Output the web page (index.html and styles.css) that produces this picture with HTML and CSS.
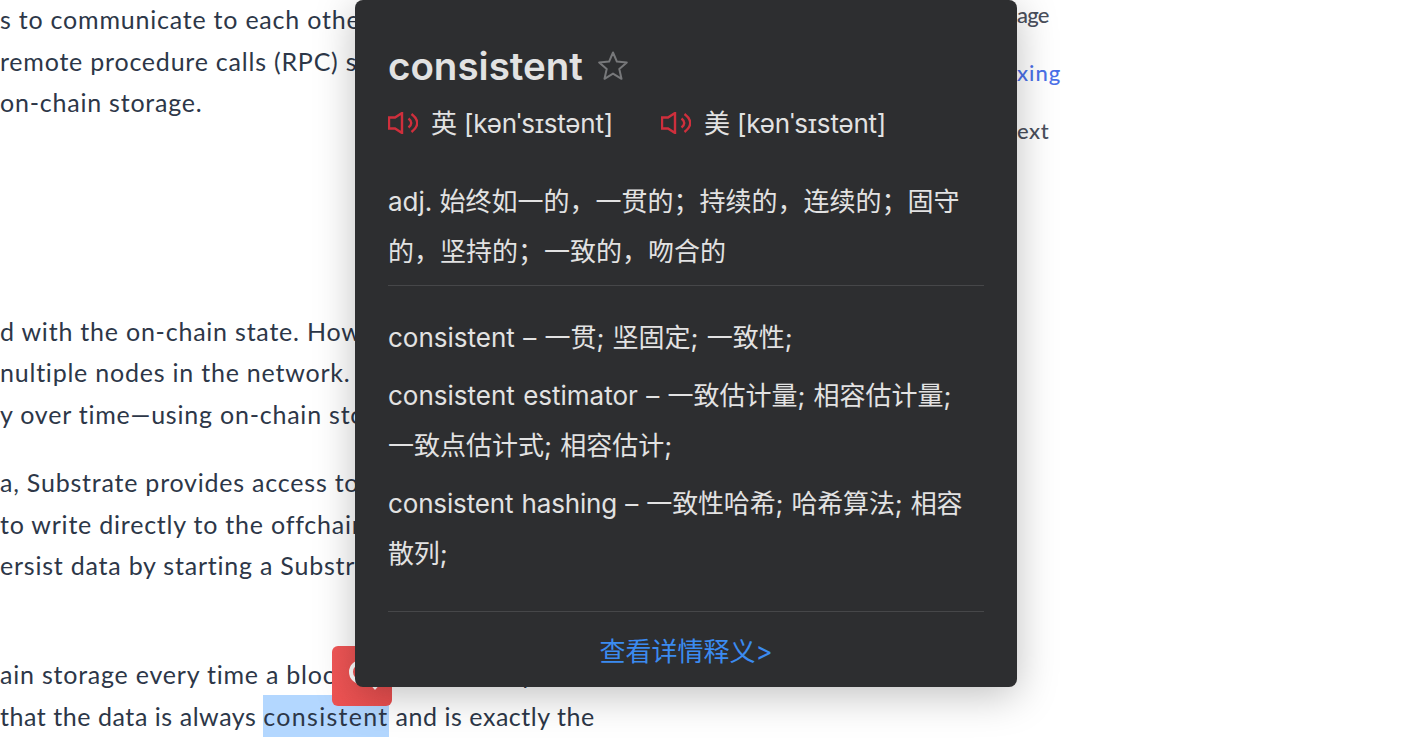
FILE: index.html
```html
<!DOCTYPE html>
<html lang="en">
    <head>
        <meta charset="UTF-8" />
        <title>consistent</title>
        <link rel="stylesheet" href="styles.css">
    </head>
    <body>
        <main class="article">
            <p class="para para-first">
                <span class="line">s to communicate to each othe</span>
                <span class="line">remote procedure calls (RPC) s</span>
                <span class="line">on-chain storage.</span>
            </p>
            <p class="para para-far">
                <span class="line">d with the on-chain state. Howe</span>
                <span class="line">nultiple nodes in the network. T</span>
                <span class="line">y over time—using on-chain sto</span>
            </p>
            <p class="para para-third">
                <span class="line">a, Substrate provides access to</span>
                <span class="line">to write directly to the offchain</span>
                <span class="line">ersist data by starting a Substr</span>
            </p>
            <p class="para para-mid">
                <span class="line">ain storage every time a block is processed by</span>
                <span class="line line-last">that the data is always <span class="selected">consistent</span> and is exactly the</span>
            </p>
        </main>
        <nav class="toc">
            <a class="toc-item toc-age">age</a>
            <a class="toc-item toc-active">xing</a>
            <a class="toc-item toc-next">ext</a>
        </nav>

        <div class="search-badge">
            <svg width="60" height="60" viewBox="0 0 60 60">
                <circle cx="29" cy="26" r="10" fill="none" stroke="#fff" stroke-width="4" />
                <path d="M36 36 L50 36 L43 44 Z" fill="#fff" />
            </svg>
        </div>

        <section class="popup">
            <div class="word-row">
                <h1 class="word">consistent</h1>
                <svg class="star" width="30" height="30" viewBox="0 0 30 30">
                    <path d="M15 1.5 L18.9 10.6 L28.8 11.5 L21.3 18 L23.5 27.8 L15 22.6 L6.5 27.8 L8.7 18 L1.2 11.5 L11.1 10.6 Z" fill="none" stroke="#77787a" stroke-width="2" stroke-linejoin="round" />
                </svg>
            </div>
            <div class="phonetics">
                <div class="phonetic">
                    <svg class="horn" width="30" height="22" viewBox="0 0 30 22">
                        <path d="M1 5.5 H7 L14 1 V21 L7 16.5 H1 Z" />
                        <path d="M20.5 6.5 Q26 11 20.5 15.5" />
                        <path d="M23.5 2 Q35 11 23.5 20" />
                    </svg>
                    <span>英 [kənˈsɪstənt]</span>
                </div>
                <div class="phonetic">
                    <svg class="horn" width="30" height="22" viewBox="0 0 30 22">
                        <path d="M1 5.5 H7 L14 1 V21 L7 16.5 H1 Z" />
                        <path d="M20.5 6.5 Q26 11 20.5 15.5" />
                        <path d="M23.5 2 Q35 11 23.5 20" />
                    </svg>
                    <span>美 [kənˈsɪstənt]</span>
                </div>
            </div>
            <p class="meaning">adj. 始终如一的，一贯的；持续的，连续的；固守的，坚持的；一致的，吻合的</p>
            <ul class="phrases">
                <li>consistent – 一贯; 坚固定; 一致性;</li>
                <li>consistent estimator – 一致估计量; 相容估计量;<br>一致点估计式; 相容估计;</li>
                <li class="phrase-tight">consistent hashing – 一致性哈希; 哈希算法; 相容散列;</li>
            </ul>
            <a class="more">查看详情释义&gt;</a>
        </section>
    </body>
</html>
```

FILE: styles.css
```css
* {
    box-sizing: border-box;
    margin: 0;
    padding: 0;
}
html,
body {
    height: 756px;
    overflow: hidden;
}
body {
    background: #fff;
    font-family: Lato, sans-serif;
}
.article {
    color: #2d3748;
    font-size: 25px;
    letter-spacing: 0.78px;
}
.line {
    display: block;
    height: 41.5px;
    line-height: 41.5px;
    white-space: nowrap;
}
.line-last {
    letter-spacing: 0.55px;
}
.para {
    margin-bottom: 26px;
}
.para-first {
    margin-top: -1px;
}
.para-far {
    margin-top: 187px;
}
.para-third {
    margin-top: 27px;
}
.para-mid {
    margin-top: 67px;
}
.selected {
    display: inline-block;
    background: #b3d7ff;
    line-height: 42px;
    letter-spacing: 1.28px;
}
.toc {
    position: absolute;
    left: 1017px;
    top: 0;
    display: flex;
    flex-direction: column;
    gap: 29px;
    font-size: 22px;
    font-weight: 500;
    color: #4a4f5c;
}
.toc-item {
    height: 29px;
    line-height: 29px;
}
.toc-age {
    letter-spacing: -0.8px;
}
.toc-active {
    color: #4a70e8;
    letter-spacing: 1px;
}
.toc-next {
    letter-spacing: 0.6px;
}
.search-badge {
    position: absolute;
    left: 332px;
    top: 646px;
    width: 60px;
    height: 60px;
    border-radius: 6px;
    background: linear-gradient(135deg, #f25757, #ea4f4f);
}
.popup {
    position: absolute;
    left: 355px;
    top: 0;
    width: 662px;
    height: 687px;
    padding: 0 33px;
    background: #2d2e30;
    border-radius: 8px;
    box-shadow: 0 8px 40px rgba(0, 0, 0, 0.25);
    color: #e2e2e2;
    font-family: Inter, "Noto Sans CJK SC", sans-serif;
    font-size: 26px;
}
.word-row {
    display: flex;
    align-items: center;
    gap: 15px;
    padding-top: 41px;
    height: 91px;
}
.word {
    font-size: 38.5px;
    font-weight: 600;
    line-height: 50px;
}
.phonetics {
    display: flex;
    gap: 48px;
    height: 60px;
    align-items: center;
    letter-spacing: -0.2px;
}
.phonetic {
    display: flex;
    align-items: center;
    gap: 13px;
}
.horn {
    margin-top: 4px;
    fill: none;
    stroke: #cf2f3c;
    stroke-width: 2.4;
}
.meaning {
    margin-top: 26px;
    line-height: 50px;
    padding-bottom: 8px;
    border-bottom: 1px solid #464749;
}
.phrases {
    list-style: none;
    padding: 27px 0 24px;
    border-bottom: 1px solid #464749;
    line-height: 50px;
    word-spacing: 1px;
}
.phrases li {
    margin-bottom: 8px;
}
.phrases .phrase-tight {
    letter-spacing: -0.15px;
}
.more {
    display: block;
    margin-top: 15px;
    text-align: center;
    color: #3b8bf0;
    line-height: 50px;
}
```
